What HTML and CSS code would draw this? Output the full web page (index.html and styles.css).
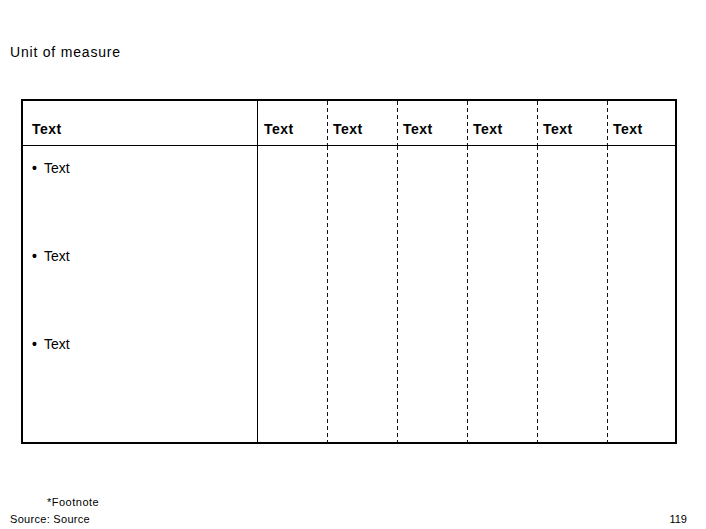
FILE: index.html
```html
<!DOCTYPE html>
<html>
<head>
<meta charset="utf-8">
<link rel="stylesheet" href="styles.css">
</head>
<body>
<div class="page">
  <div class="title">Unit of measure</div>
  <div class="table">
    <div class="hcell first">Text</div>
    <div class="hcell solid">Text</div>
    <div class="hcell dashed">Text</div>
    <div class="hcell dashed">Text</div>
    <div class="hcell dashed">Text</div>
    <div class="hcell dashed">Text</div>
    <div class="hcell dashed">Text</div>
    <div class="bcell first">
      <div class="item"><span class="dot">•</span><span>Text</span></div>
      <div class="item"><span class="dot">•</span><span>Text</span></div>
      <div class="item"><span class="dot">•</span><span>Text</span></div>
    </div>
    <div class="bcell solid"></div>
    <div class="bcell dashed"></div>
    <div class="bcell dashed"></div>
    <div class="bcell dashed"></div>
    <div class="bcell dashed"></div>
    <div class="bcell dashed"></div>
  </div>
  <div class="footer">
    <div class="notes">
      <div class="footnote">*Footnote</div>
      <div class="source">Source: Source</div>
    </div>
    <div class="pageno">119</div>
  </div>
</div>
</body>
</html>
```
FILE: styles.css
```css
html, body {
  margin: 0;
  padding: 0;
  background: #ffffff;
}
body {
  font-family: "Liberation Sans", Arial, sans-serif;
  color: #000000;
  width: 706px;
  height: 529px;
  overflow: hidden;
}
.page {
  display: flex;
  flex-direction: column;
}
.title {
  margin: 44px 0 0 10px;
  font-size: 14px;
  line-height: 16px;
  letter-spacing: 0.8px;
}
.table {
  margin: 39px 0 0 21px;
  width: 652px;
  border: 2px solid #000;
  display: grid;
  grid-template-columns: 234px 70px 70px 70px 70px 70px 68px;
  grid-template-rows: 45px 296px;
}
.hcell {
  font-size: 14px;
  font-weight: bold;
  line-height: 16px;
  letter-spacing: 0.5px;
  padding-top: 20px;
  box-sizing: border-box;
  border-bottom: 1px solid #000;
}
.hcell.first {
  padding-left: 9px;
}
.hcell.solid, .hcell.dashed {
  padding-left: 6px;
}
.solid {
  border-left: 1px solid #000;
}
.dashed {
  background-image: linear-gradient(to bottom, #111 0 4px, transparent 4px 7px);
  background-size: 1px 7px;
  background-repeat: repeat-y;
  background-position: left top;
}
.bcell.first {
  padding-top: 14px;
  padding-left: 9px;
  box-sizing: border-box;
}
.item {
  display: flex;
  height: 88px;
  font-size: 14px;
  line-height: 16px;
}
.dot {
  width: 12px;
  font-weight: bold;
}
.footer {
  margin-top: 50px;
  display: flex;
  justify-content: space-between;
  align-items: flex-end;
  padding-right: 19px;
  font-size: 11px;
  line-height: 17px;
}
.notes {
  padding-left: 10px;
  letter-spacing: 0.3px;
}
.footnote {
  padding-left: 37px;
  letter-spacing: 0.5px;
}
.pageno {
  line-height: 17px;
}
```
